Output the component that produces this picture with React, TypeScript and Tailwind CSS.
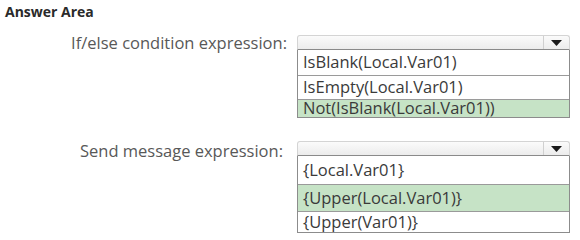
import React from "react";

type Opt = { text: string; sel?: boolean; h: number };

function Dropdown({ opts }: { opts: Opt[] }) {
  return (
    <div className="w-[273px] flex flex-col">
      <div className="h-[15px] flex border border-[#d4d4d4] border-b-[#8a8a8a] rounded-t-[3px] bg-gradient-to-b from-[#fbfbfb] to-[#ececec]">
        <div className="flex-1" />
        <div className="w-[26px] border-l border-[#d0d0d0] flex items-center justify-center">
          <svg width="11" height="6" viewBox="0 0 11 6">
            <polygon points="0,0 11,0 5.5,6" fill="#1a1a1a" />
          </svg>
        </div>
      </div>
      <div className="border-x border-b border-[#8c8c8c]">
        {opts.map((o, i) => (
          <div
            key={i}
            className={
              (i > 0 ? "border-t border-[#9a9a9a] " : "") +
              (o.sel ? "bg-[#c6e3c6] " : "bg-white ") +
              "flex items-center pl-[5px] text-[16.5px] text-[#3a3a3a] whitespace-nowrap"
            }
            style={{ height: o.h }}
          >
            {o.text}
          </div>
        ))}
      </div>
    </div>
  );
}

export default function App() {
  return (
    <div
      className="w-[580px] h-[240px] bg-white relative overflow-hidden"
      style={{ fontFamily: "'Open Sans', 'Noto Sans', sans-serif" }}
    >
      <div className="pl-[5px] pt-[3px] text-[14px] font-bold text-[#2a2a2a] leading-[18px]">
        Answer Area
      </div>
      <div className="flex mt-[14px]">
        <div className="w-[297px] h-[16px] pr-[10px] flex items-center justify-end text-[16.5px] text-[#585858] whitespace-nowrap">
          If/else condition expression:
        </div>
        <Dropdown
          opts={[
            { text: "IsBlank(Local.Var01)", h: 25 },
            { text: "IsEmpty(Local.Var01)", h: 24 },
            { text: "Not(IsBlank(Local.Var01))", sel: true, h: 18 },
          ]}
        />
      </div>
      <div className="flex mt-[23px]">
        <div className="w-[297px] h-[16px] mt-[2px] pr-[14px] flex items-center justify-end text-[16.5px] text-[#585858] whitespace-nowrap">
          Send message expression:
        </div>
        <Dropdown
          opts={[
            { text: "{Local.Var01}", h: 28 },
            { text: "{Upper(Local.Var01)}", sel: true, h: 27 },
            { text: "{Upper(Var01)}", h: 21 },
          ]}
        />
      </div>
    </div>
  );
}
